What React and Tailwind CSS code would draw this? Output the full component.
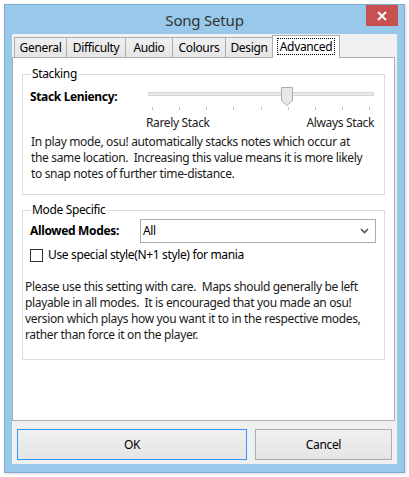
const tabs = ["General", "Difficulty", "Audio", "Colours", "Design"]
const tabWidths = ["w-[53px]", "w-[60px]", "w-[48px]", "w-[54px]", "w-[48px]"]

const Legend = ({ children }) => (
    <span className="absolute left-[8px] top-[-9px] bg-white px-[1px] leading-[16px]">{children}</span>
)

const App = () => {
    return (
        <div className="w-[409px] h-[477px] bg-white pt-[4px] pl-[4px] text-[12px] tracking-[-0.35px] text-[#000] font-['Noto_Sans',sans-serif]">

            {/* WINDOW */}
            <div className="w-[401px] h-[469px] bg-[#99c9ea] border border-[#7fa9d1] flex flex-col shadow-[1px_1px_3px_rgba(0,0,0,0.15)]">

                {/* TITLE BAR */}
                <div className="h-[29px] flex items-start relative">
                    <div className="flex-1 text-center text-[15px] tracking-[-0.2px] leading-[30px] text-[#333]">Song Setup</div>
                    <div className="absolute right-[6px] top-0 w-[32px] h-[21px] bg-[#c75050] flex items-center justify-center">
                        <svg width="10" height="10" viewBox="0 0 10 10">
                            <path d="M1 1 L9 9 M9 1 L1 9" stroke="#fff" strokeWidth="2" />
                        </svg>
                    </div>
                </div>

                {/* CLIENT */}
                <div className="mx-[7px] h-[430px] bg-[#f0f0f0] flex flex-col">

                    {/* TABS */}
                    <div className="h-[23px] flex items-end pl-[2px] relative z-10">
                        {tabs.map((t, i) => (
                            <div key={t} className={`${tabWidths[i]} h-[20px] border border-[#acacac] border-b-0 -ml-px first:ml-0 bg-gradient-to-b from-[#f0f0f0] to-[#e5e5e5] text-center leading-[19px]`}>
                                {t}
                            </div>
                        ))}
                        <div className="w-[68px] h-[23px] -ml-px border border-[#acacac] border-b-0 bg-white mb-[-1px] flex items-start justify-center pt-[2px]">
                            <span className="border border-dotted border-black px-[2px] leading-[15px]">Advanced</span>
                        </div>
                    </div>

                    {/* TAB PAGE */}
                    <div className="w-[383px] h-[364px] border border-[#adadad] bg-white pt-[16px] px-[9px]">

                        {/* Stacking */}
                        <div className="relative h-[121px] border border-[#dcdcdc] pt-[12px]">
                            <Legend>Stacking</Legend>
                            <div className="flex items-start">
                                <div className="w-[118px] pl-[7px] font-bold leading-[16px] pt-[2px]">Stack Leniency:</div>
                                <div className="w-[226px] ml-[7px]">
                                    <div className="relative h-[18px]">
                                        <div className="absolute left-0 right-0 top-[5px] h-[4px] bg-[#e7e7e7] border border-[#d6d6d6]" />
                                        <svg className="absolute left-[133px] top-0" width="12" height="19" viewBox="0 0 12 19">
                                            <path d="M0.5 0.5 H11.5 V13.5 L6 18.5 L0.5 13.5 Z" fill="#e8e8e8" stroke="#acacac" />
                                        </svg>
                                    </div>
                                    <div className="flex justify-between px-[4px] mt-[2px]">
                                        {[...Array(9)].map((_, i) => (
                                            <div key={i} className="w-px h-[3px] bg-[#c4c4c4]" />
                                        ))}
                                    </div>
                                    <div className="flex justify-between mt-[5px] -ml-[2px] leading-[16px] text-[#222]">
                                        <span>Rarely Stack</span>
                                        <span>Always Stack</span>
                                    </div>
                                </div>
                            </div>
                            <div className="pl-[8px] pt-[3px] leading-[16px] whitespace-pre text-[#1a1a1a]">
                                <div>In play mode, osu! automatically stacks notes which occur at</div>
                                <div>the same location.  Increasing this value means it is more likely</div>
                                <div>to snap notes of further time-distance.</div>
                            </div>
                        </div>

                        {/* Mode Specific */}
                        <div className="relative h-[150px] mt-[15px] border border-[#dcdcdc] pt-[8px]">
                            <Legend>Mode Specific</Legend>
                            <div className="flex items-center">
                                <div className="w-[117px] pl-[7px] font-bold leading-[16px]">Allowed Modes:</div>
                                <div className="w-[236px] h-[24px] border border-[#acacac] bg-white flex items-center justify-between pl-[2px] pr-[6px]">
                                    <span>All</span>
                                    <svg width="9" height="6" viewBox="0 0 9 6">
                                        <path d="M1 1 L4.5 4.5 L8 1" stroke="#555" strokeWidth="1.6" fill="none" />
                                    </svg>
                                </div>
                            </div>
                            <div className="flex items-center mt-[4px] pl-[7px]">
                                <div className="w-[13px] h-[13px] border border-[#333] bg-white" />
                                <span className="ml-[5px] leading-[16px]">Use special style(N+1 style) for mania</span>
                            </div>
                            <div className="pl-[2px] pt-[16px] leading-[16px] whitespace-pre text-[#1a1a1a]">
                                <div>Please use this setting with care.  Maps should generally be left</div>
                                <div>playable in all modes.  It is encouraged that you made an osu!</div>
                                <div>version which plays how you want it to in the respective modes,</div>
                                <div>rather than force it on the player.</div>
                            </div>
                        </div>
                    </div>

                    {/* BUTTONS */}
                    <div className="flex pl-[5px] pt-[8px] gap-[8px]">
                        <button className="w-[230px] h-[31px] border border-[#3399ff] bg-gradient-to-b from-[#f0f0f0] to-[#e5e5e5] text-center">
                            OK
                        </button>
                        <button className="w-[137px] h-[31px] border border-[#adadad] bg-gradient-to-b from-[#f0f0f0] to-[#e5e5e5] text-center">
                            Cancel
                        </button>
                    </div>
                </div>
            </div>
        </div>
    )
}

export default App
